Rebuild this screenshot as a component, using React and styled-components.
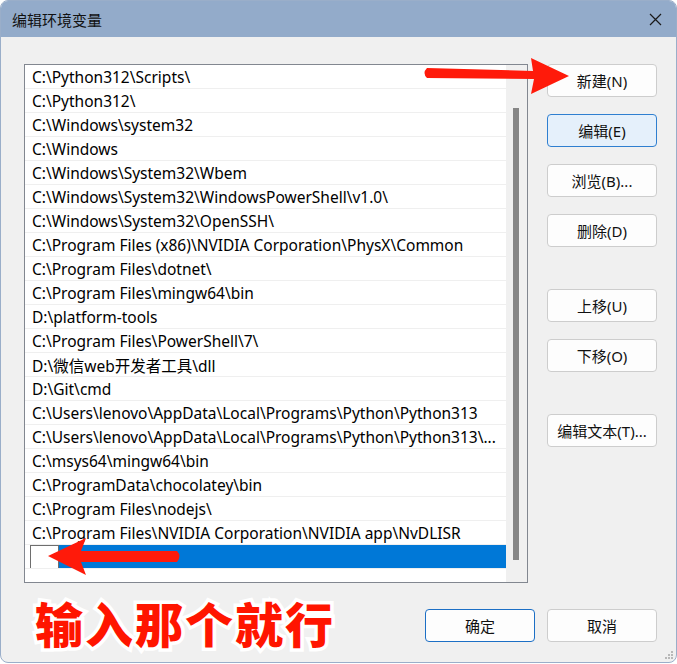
import React from 'react';
import styled, { createGlobalStyle } from 'styled-components';

const GlobalStyle = createGlobalStyle`
  html, body {
    margin: 0;
    padding: 0;
    background: #ffffff;
  }
  body {
    font-family: "Noto Sans", "Noto Sans CJK SC", sans-serif;
  }
`;

const Window = styled.div`
  position: relative;
  box-sizing: border-box;
  width: 677px;
  height: 663px;
  background: #f0f0f0;
  border: 1px solid #9aaec9;
  border-radius: 8px;
  overflow: hidden;
`;

const TitleBar = styled.div`
  display: flex;
  align-items: center;
  justify-content: space-between;
  height: 36px;
  padding: 0 14px 0 11px;
  background: #93abca;
  color: #111;
  font-size: 15px;
`;

const Body = styled.div`
  display: flex;
  padding: 27px 19px 0 23px;
  gap: 19px;
`;

const ListBox = styled.div`
  box-sizing: border-box;
  display: flex;
  width: 505px;
  height: 519px;
  border: 1px solid #828790;
  background: #ffffff;
`;

const Rows = styled.div`
  flex: 1;
  display: flex;
  flex-direction: column;
  min-width: 0;
`;

const Row = styled.div`
  box-sizing: border-box;
  display: flex;
  align-items: center;
  height: 24px;
  padding-left: 7px;
  padding-top: 1px;
  border-bottom: 1px solid #efefef;
  font-size: 15.5px;
  color: #000;
  white-space: nowrap;
  overflow: hidden;
  background: ${(p) => (p.$selected ? 'linear-gradient(to right, #fff 0 5px, #0078d7 5px)' : '#fff')};
`;

const EditBox = styled.div`
  box-sizing: border-box;
  width: 29px;
  height: 24px;
  margin: -1px 0 0 -2px;
  background: #fff;
  border: 1px solid #6e6e6e;
`;

const ScrollTrack = styled.div`
  position: relative;
  width: 21px;
  background: #f0f0f0;
`;

const ScrollThumb = styled.div`
  position: absolute;
  left: 7px;
  top: 43px;
  width: 6px;
  height: 452px;
  background: #868686;
`;

const Side = styled.div`
  display: flex;
  flex-direction: column;
`;

const Button = styled.button`
  box-sizing: border-box;
  width: 110px;
  height: 33px;
  margin-top: ${(p) => p.$gap || 0}px;
  border: 1px solid ${(p) => (p.$focus ? '#2f7fd0' : p.$default ? '#1c6fc5' : '#cdcdcd')};
  border-radius: 4px;
  background: ${(p) => (p.$focus ? '#e5f0fb' : '#fdfdfd')};
  font-family: "Noto Sans", "Noto Sans CJK SC", sans-serif;
  font-size: 15px;
  color: #111;
  padding: 0;
`;

const Footer = styled.div`
  display: flex;
  align-items: center;
  padding: 9px 19px 0 34px;
`;

const Note = styled.div`
  flex: 1;
  font-family: "Noto Sans CJK SC", sans-serif;
  font-weight: 900;
  font-size: 48px;
  letter-spacing: 2px;
  color: #ff1500;
  -webkit-text-stroke: 7px #ffffff;
  paint-order: stroke fill;
  line-height: 60px;
`;

const Buttons = styled.div`
  display: flex;
  gap: 12px;
  margin-top: 6px;
`;

const Overlay = styled.svg`
  position: absolute;
  left: 0;
  top: 0;
  pointer-events: none;
`;

const Grip = styled.svg`
  position: absolute;
  right: 2px;
  bottom: 2px;
`;

const paths = [
  'C:\\Python312\\Scripts\\',
  'C:\\Python312\\',
  'C:\\Windows\\system32',
  'C:\\Windows',
  'C:\\Windows\\System32\\Wbem',
  'C:\\Windows\\System32\\WindowsPowerShell\\v1.0\\',
  'C:\\Windows\\System32\\OpenSSH\\',
  'C:\\Program Files (x86)\\NVIDIA Corporation\\PhysX\\Common',
  'C:\\Program Files\\dotnet\\',
  'C:\\Program Files\\mingw64\\bin',
  'D:\\platform-tools',
  'C:\\Program Files\\PowerShell\\7\\',
  'D:\\微信web开发者工具\\dll',
  'D:\\Git\\cmd',
  'C:\\Users\\lenovo\\AppData\\Local\\Programs\\Python\\Python313',
  'C:\\Users\\lenovo\\AppData\\Local\\Programs\\Python\\Python313\\...',
  'C:\\msys64\\mingw64\\bin',
  'C:\\ProgramData\\chocolatey\\bin',
  'C:\\Program Files\\nodejs\\',
  'C:\\Program Files\\NVIDIA Corporation\\NVIDIA app\\NvDLISR',
];

export default function App() {
  return (
    <>
      <GlobalStyle />
      <Window>
        <TitleBar>
          <span>编辑环境变量</span>
          <svg width="13" height="13" viewBox="0 0 13 13">
            <path d="M1 1 L12 12 M12 1 L1 12" stroke="#1a1a1a" strokeWidth="1.2" />
          </svg>
        </TitleBar>
        <Body>
          <ListBox>
            <Rows>
              {paths.map((p) => (
                <Row key={p}>{p}</Row>
              ))}
              <Row $selected>
                <EditBox />
              </Row>
            </Rows>
            <ScrollTrack>
              <ScrollThumb />
            </ScrollTrack>
          </ListBox>
          <Side>
            <Button>新建(N)</Button>
            <Button $gap={17} $focus>编辑(E)</Button>
            <Button $gap={17}>浏览(B)...</Button>
            <Button $gap={17}>删除(D)</Button>
            <Button $gap={42}>上移(U)</Button>
            <Button $gap={17}>下移(O)</Button>
            <Button $gap={42}>编辑文本(T)...</Button>
          </Side>
        </Body>
        <Footer>
          <Note>输入那个就行</Note>
          <Buttons>
            <Button $default>确定</Button>
            <Button>取消</Button>
          </Buttons>
        </Footer>
        <Grip width="10" height="10" viewBox="0 0 10 10">
          <g fill="#b8b8b8">
            <rect x="7" y="1" width="2" height="2" />
            <rect x="4" y="4" width="2" height="2" />
            <rect x="7" y="4" width="2" height="2" />
            <rect x="1" y="7" width="2" height="2" />
            <rect x="4" y="7" width="2" height="2" />
            <rect x="7" y="7" width="2" height="2" />
          </g>
        </Grip>
        <Overlay width="677" height="663" viewBox="0 0 677 663">
          <g fill="#ff1a0a">
            <path d="M426 67 Q421 72 426 77 L533 78 L530 93 L568 75 L530 57 L532 70 Z" />
            <path d="M176 550 Q181 555 176 561 L80 561 L85 574 L47 555 L85 537 L80 550 Z" />
          </g>
        </Overlay>
      </Window>
    </>
  );
}
